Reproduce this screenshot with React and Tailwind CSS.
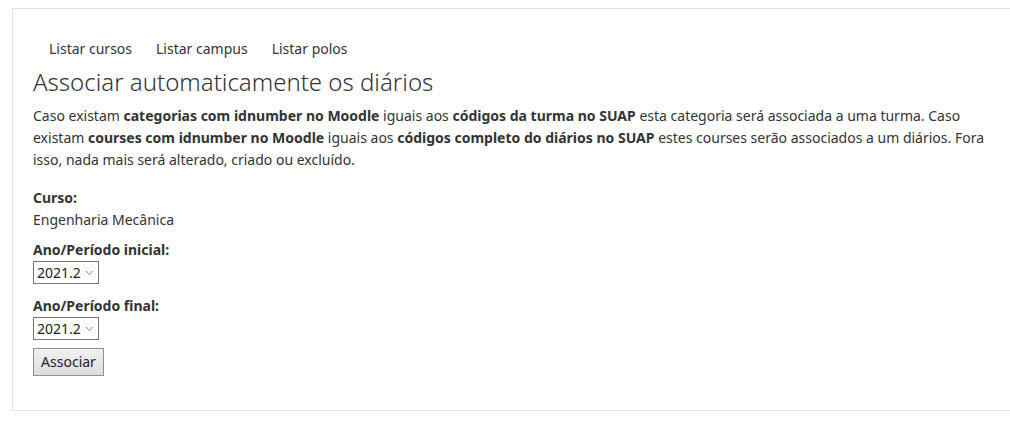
export default function App() {

  const links = ["Listar cursos", "Listar campus", "Listar polos"]

  return (
    <div
      className="w-[1010px] h-[422px] overflow-hidden bg-white pt-2 pl-3 text-[14px] leading-[22px] text-[#333]"
      style={{ fontFamily: '"Noto Sans", "Open Sans", sans-serif' }}
    >
      <div className="border border-r-0 border-[#dee2e6] w-[1100px] px-5 pt-[21px] pb-[34px]">

        <nav className="flex pl-1">
          {links.map(link => (
            <a key={link} href="#" className="px-3 py-2 leading-[21px] text-[#333]">
              {link}
            </a>
          ))}
        </nav>

        <h2 className="text-[24px] font-light leading-[29px] text-[#333] mb-[9px]">
          Associar automaticamente os diários
        </h2>

        <p className="mb-4">
          Caso existam <b>categorias com idnumber no Moodle</b> iguais aos <b>códigos da turma no SUAP</b> esta categoria será associada a uma turma. Caso
          <br />
          existam <b>courses com idnumber no Moodle</b> iguais aos <b>códigos completo do diários no SUAP</b> estes courses serão associados a um diários. Fora
          <br />
          isso, nada mais será alterado, criado ou excluído.
        </p>

        <div className="mb-2">
          <div className="font-bold">Curso:</div>
          <div>Engenharia Mecânica</div>
        </div>

        <div className="mb-[11px]">
          <label className="block font-bold">Ano/Período inicial:</label>
          <PeriodSelect />
        </div>

        <div className="mb-2">
          <label className="block font-bold">Ano/Período final:</label>
          <PeriodSelect />
        </div>

        <button
          className="
            w-[71px] h-[28px]
            border border-[#8f8f8f]
            bg-gradient-to-b from-[#f0f0f0] to-[#dddddd]
            text-[14px] text-[#222]
          "
        >
          Associar
        </button>

      </div>
    </div>
  )
}

function PeriodSelect() {
  return (
    <div className="flex items-center justify-between w-[66px] h-[23px] border border-[#767676] bg-white pl-[3px] pr-[4px] text-[14px] text-[#222]">
      <span className="leading-[21px]">2021.2</span>
      <svg width="9" height="6" viewBox="0 0 9 6" className="mt-[1px]">
        <path d="M1 1 L4.5 4.5 L8 1" fill="none" stroke="#888" strokeWidth="1" />
      </svg>
    </div>
  )
}
